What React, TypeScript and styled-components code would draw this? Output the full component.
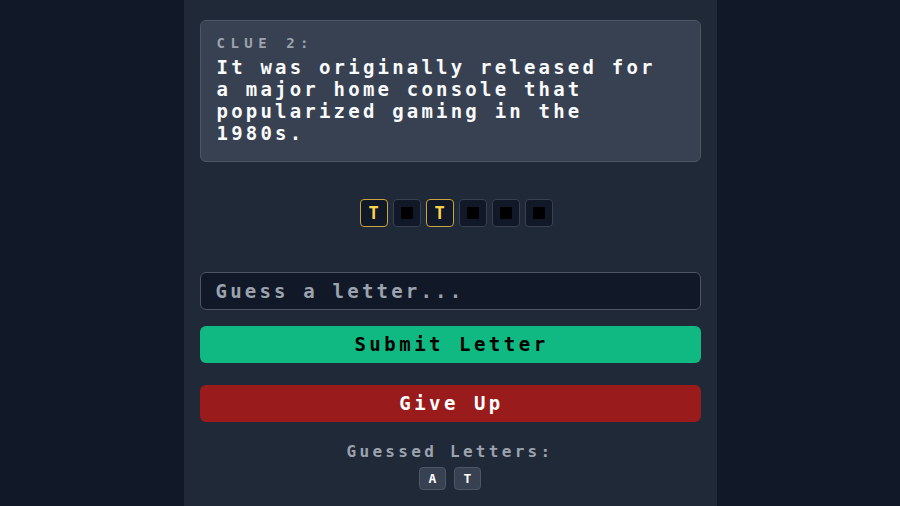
import React from "react";
import styled, { createGlobalStyle } from "styled-components";

const GlobalStyle = createGlobalStyle`
  html, body {
    margin: 0;
    padding: 0;
    background: #111827;
  }
  body {
    font-family: "DejaVu Sans Mono", "Liberation Mono", monospace;
    -webkit-font-smoothing: none;
  }
`;

const Page = styled.div`
  display: flex;
  justify-content: center;
  min-height: 100vh;
`;

const Column = styled.main`
  width: 533px;
  box-sizing: border-box;
  padding: 20px 16px 24px;
  background: #1f2937;
  display: flex;
  flex-direction: column;
`;

const ClueCard = styled.section`
  background: #374151;
  border: 1px solid #4b5563;
  border-radius: 6px;
  padding: 12px 16px 17px;
`;

const ClueLabel = styled.div`
  font-size: 14px;
  line-height: 20px;
  font-weight: bold;
  letter-spacing: 5.5px;
  color: #9ca3af;
  margin-bottom: 3px;
`;

const ClueText = styled.p`
  margin: 0;
  font-size: 19px;
  line-height: 22px;
  font-weight: bold;
  letter-spacing: 3.2px;
  color: #f9fafb;
  max-width: 470px;
`;

const WordRow = styled.div`
  display: flex;
  justify-content: center;
  gap: 5px;
  margin-top: 37px;
  padding-left: 12px;
`;

const LetterBox = styled.div<{ $found: boolean }>`
  width: 28px;
  height: 28px;
  box-sizing: border-box;
  border-radius: 4px;
  border: 1px solid ${(p) => (p.$found ? "#c9a33b" : "#374151")};
  background: #111827;
  display: flex;
  align-items: center;
  justify-content: center;
  font-size: 17px;
  font-weight: bold;
  color: #fcd34d;
`;

const Hidden = styled.span`
  width: 12px;
  height: 12px;
  background: #000;
  border-radius: 1px;
`;

const GuessInput = styled.input`
  margin-top: 45px;
  height: 38px;
  box-sizing: border-box;
  width: 100%;
  background: #111827;
  border: 1px solid #4b5563;
  border-radius: 6px;
  padding: 0 15px;
  font-family: inherit;
  font-size: 19px;
  font-weight: bold;
  letter-spacing: 3.2px;
  color: #f9fafb;
  outline: none;
  &::placeholder {
    color: #9ca3af;
  }
`;

const ActionButton = styled.button<{ $tone: "go" | "stop"; $gap: number }>`
  margin-top: ${(p) => p.$gap}px;
  height: 37px;
  width: 100%;
  border: none;
  border-radius: 6px;
  background: ${(p) => (p.$tone === "go" ? "#10b981" : "#991b1b")};
  color: ${(p) => (p.$tone === "go" ? "#000" : "#fff")};
  font-family: inherit;
  font-size: 19px;
  font-weight: bold;
  letter-spacing: 3.5px;
  padding: 0 0 2px 3px;
  cursor: pointer;
`;

const GuessedLabel = styled.div`
  margin-top: 20px;
  text-align: center;
  font-size: 16px;
  line-height: 20px;
  font-weight: bold;
  letter-spacing: 3.3px;
  color: #9ca3af;
`;

const ChipRow = styled.div`
  display: flex;
  justify-content: center;
  gap: 8px;
  margin-top: 5px;
`;

const Chip = styled.span`
  width: 27px;
  height: 23px;
  box-sizing: border-box;
  background: #374151;
  border: 1px solid #4b5563;
  border-radius: 4px;
  display: flex;
  align-items: center;
  justify-content: center;
  font-size: 13px;
  font-weight: bold;
  color: #fff;
`;

const word = ["T", null, "T", null, null, null];
const guessed = ["A", "T"];

export default function App() {
  return (
    <>
      <GlobalStyle />
      <Page>
        <Column>
          <ClueCard>
            <ClueLabel>CLUE 2:</ClueLabel>
            <ClueText>
              It was originally released for a major home console that
              popularized gaming in the 1980s.
            </ClueText>
          </ClueCard>

          <WordRow>
            {word.map((ch, i) => (
              <LetterBox key={i} $found={ch !== null}>
                {ch ?? <Hidden />}
              </LetterBox>
            ))}
          </WordRow>

          <GuessInput placeholder="Guess a letter..." />
          <ActionButton $tone="go" $gap={16}>
            Submit Letter
          </ActionButton>
          <ActionButton $tone="stop" $gap={22}>
            Give Up
          </ActionButton>

          <GuessedLabel>Guessed Letters:</GuessedLabel>
          <ChipRow>
            {guessed.map((g) => (
              <Chip key={g}>{g}</Chip>
            ))}
          </ChipRow>
        </Column>
      </Page>
    </>
  );
}
